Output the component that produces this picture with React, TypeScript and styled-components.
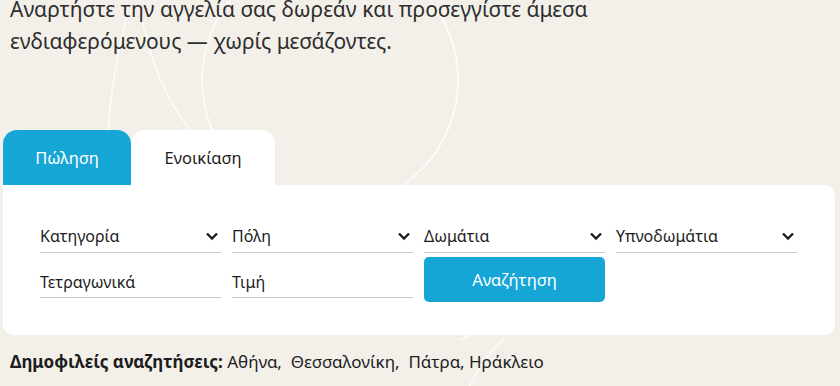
import React from 'react';
import styled, { createGlobalStyle } from 'styled-components';

const GlobalStyle = createGlobalStyle`
  html, body {
    margin: 0;
    padding: 0;
  }
  body {
    background-color: #f3f0ea;
    font-family: 'Noto Sans', 'Open Sans', sans-serif;
    color: #1d1d1d;
  }
`;

const Page = styled.div`
  position: relative;
  width: 840px;
  height: 386px;
  overflow: hidden;
  background-color: #f3f0ea;
`;

const Decoration = styled.svg`
  position: absolute;
  left: 0;
  top: 0;
  pointer-events: none;
`;

const Content = styled.div`
  position: relative;
  display: flex;
  flex-direction: column;
  margin-top: -7px;
`;

const Lead = styled.p`
  margin: 0 0 0 10px;
  font-size: 21px;
  line-height: 32px;
  color: #2e2e2e;
`;

const Tabs = styled.div`
  display: flex;
  margin: 73px 0 0 3px;
`;

const Tab = styled.div<{ active?: boolean }>`
  display: flex;
  align-items: center;
  justify-content: center;
  height: 55px;
  width: ${(p) => (p.active ? '128px' : '144px')};
  border-radius: 14px 14px 0 0;
  background-color: ${(p) => (p.active ? '#16a6d6' : '#ffffff')};
  color: ${(p) => (p.active ? '#ffffff' : '#1d1d1d')};
  font-size: 16.5px;
`;

const Card = styled.div`
  margin: 0 5px 0 3px;
  height: 150px;
  box-sizing: border-box;
  background-color: #fff;
  border-radius: 0 10px 10px 10px;
  padding: 35px 37px 0 37px;
`;

const Grid = styled.div`
  display: grid;
  grid-template-columns: repeat(4, 181px);
  column-gap: 11px;
  row-gap: 4px;
`;

const Field = styled.div<{ lower?: boolean }>`
  display: flex;
  align-items: center;
  justify-content: space-between;
  height: ${(p) => (p.lower ? '30px' : '32px')};
  padding-top: ${(p) => (p.lower ? '10px' : '0')};
  border-bottom: 1px solid #c9c9c9;
  font-size: 16px;
  color: #1d1d1d;
`;

const Chevron = styled.svg`
  width: 14px;
  height: 10px;
  margin-right: 2px;
`;

const SearchButton = styled.button`
  height: 45px;
  border: none;
  border-radius: 5px;
  background-color: #16a6d6;
  color: #fff;
  font-family: inherit;
  font-size: 16.5px;
  cursor: pointer;
`;

const Popular = styled.div`
  margin: 15px 0 0 10px;
  font-size: 17px;
  color: #1d1d1d;

  b {
    font-weight: 700;
  }
`;

const ChevronIcon = () => (
  <Chevron viewBox="0 0 14 10">
    <path d="M2 2.5 L7 7.5 L12 2.5" fill="none" stroke="#1d1d1d" strokeWidth="2.4" />
  </Chevron>
);

const selects = ['Κατηγορία', 'Πόλη', 'Δωμάτια', 'Υπνοδωμάτια'];

export default function App() {
  return (
    <Page>
      <GlobalStyle />
      <Decoration width="840" height="386" viewBox="0 0 840 386">
        <g fill="none" stroke="#ffffff" strokeWidth="1.6" opacity="0.85">
          <circle cx="330" cy="80" r="128" />
          <path d="M128 10 C 118 50, 110 90, 108 135" />
          <path d="M140 10 C 150 60, 165 100, 192 132" />
          <path d="M460 340 C 480 330, 500 322, 520 318" />
          <path d="M470 386 C 480 365, 490 350, 505 338" />
        </g>
      </Decoration>
      <Content>
        <Lead>
          Αναρτήστε την αγγελία σας δωρεάν και προσεγγίστε άμεσα
          <br />
          ενδιαφερόμενους — χωρίς μεσάζοντες.
        </Lead>
        <Tabs>
          <Tab active>Πώληση</Tab>
          <Tab>Ενοικίαση</Tab>
        </Tabs>
        <Card>
          <Grid>
            {selects.map((s) => (
              <Field key={s}>
                {s}
                <ChevronIcon />
              </Field>
            ))}
            <Field lower>Τετραγωνικά</Field>
            <Field lower>Τιμή</Field>
            <SearchButton>Αναζήτηση</SearchButton>
          </Grid>
        </Card>
        <Popular>
          <b>Δημοφιλείς αναζητήσεις:</b> Αθήνα,&nbsp; Θεσσαλονίκη,&nbsp; Πάτρα, Ηράκλειο
        </Popular>
      </Content>
    </Page>
  );
}
